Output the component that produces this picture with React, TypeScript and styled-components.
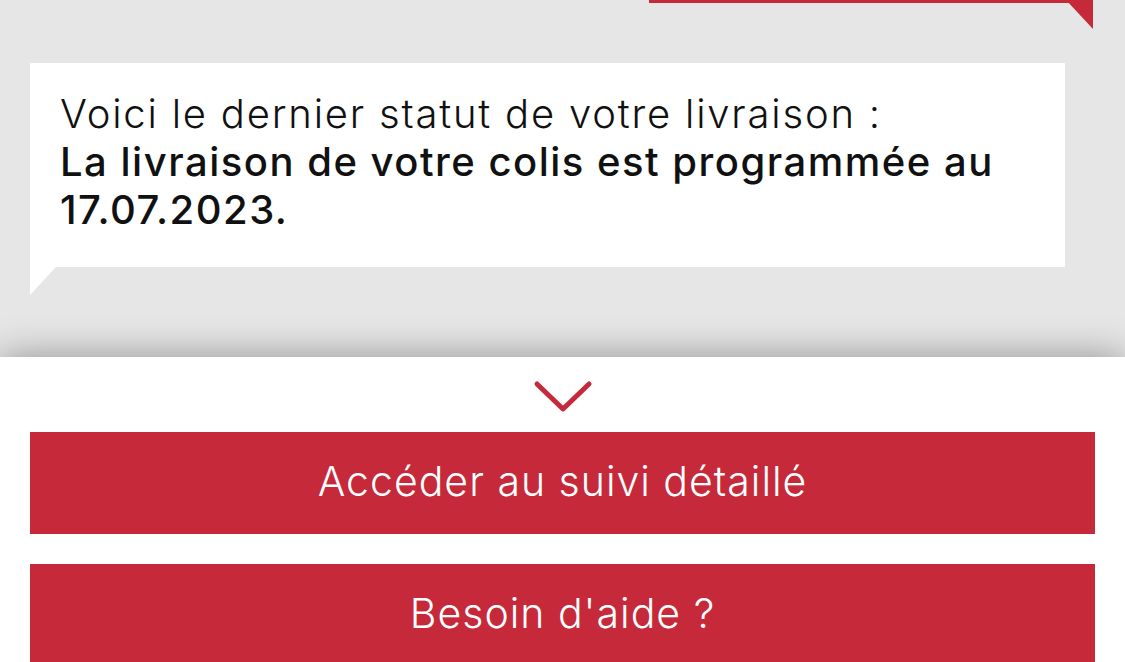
import React from "react";
import styled, { createGlobalStyle } from "styled-components";

const Global = createGlobalStyle`
  html, body { margin: 0; padding: 0; background: #ffffff; }
  body { font-family: "Inter", "Open Sans", sans-serif; overflow: hidden; }
  * { box-sizing: border-box; }
`;

const RED = "#c5293a";

const Page = styled.div`
  display: flex;
  flex-direction: column;
  width: 1125px;
  height: 662px;
  overflow: hidden;
  & > * { flex-shrink: 0; }
`;

const TopSection = styled.section`
  display: flex;
  flex-direction: column;
  background: #e6e6e6;
  height: 357px;
  padding: 0 60px 0 30px;
`;

const Ribbon = styled.div`
  position: relative;
  align-self: flex-end;
  width: 444px;
  height: 29px;
  margin-right: -28px;
  &::before {
    content: "";
    position: absolute;
    left: 0;
    top: 0;
    right: 0;
    height: 3px;
    background: ${RED};
  }
  &::after {
    content: "";
    position: absolute;
    right: 0;
    top: 0;
    width: 0;
    height: 0;
    border-top: 29px solid ${RED};
    border-left: 27px solid transparent;
  }
`;

const Bubble = styled.div`
  position: relative;
  margin-top: 34px;
  background: #ffffff;
  height: 204px;
  padding: 27px 31px 0 30px;
  font-size: 40px;
  line-height: 48px;
  color: #111111;
  &::after {
    content: "";
    position: absolute;
    left: 0;
    top: 100%;
    width: 0;
    height: 0;
    border-top: 28px solid #ffffff;
    border-right: 26px solid transparent;
  }
`;

const Light = styled.div`
  font-weight: 300;
  letter-spacing: 1.8px;
`;

const Strong = styled.div`
  font-weight: 500;
  letter-spacing: 1.5px;
`;

const Strip = styled.div`
  position: relative;
  display: flex;
  align-items: center;
  justify-content: center;
  height: 75px;
  background: #ffffff;
  box-shadow: 0 0 38px rgba(0, 0, 0, 0.38);
  z-index: 1;
`;

const Actions = styled.div`
  position: relative;
  z-index: 2;
  display: flex;
  flex-direction: column;
  gap: 30px;
  padding: 0 30px;
  background: #ffffff;
`;

const ActionButton = styled.button`
  display: flex;
  align-items: center;
  justify-content: center;
  height: 102px;
  border: none;
  background: ${RED};
  color: #ffffff;
  font-family: "Inter", "Open Sans", sans-serif;
  font-weight: 300;
  font-size: 41px;
  letter-spacing: 1px;
  padding: 0 0 5px 0;
  cursor: pointer;
`;

export default function App() {
  return (
    <>
      <Global />
      <Page>
        <TopSection>
          <Ribbon />
          <Bubble>
            <Light>Voici le dernier statut de votre livraison :</Light>
            <Strong>La livraison de votre colis est programmée au 17.07.2023.</Strong>
          </Bubble>
        </TopSection>
        <Strip>
          <svg width="60" height="36" viewBox="0 0 60 36">
            <polyline
              points="4,7 30,32 56,7"
              fill="none"
              stroke={RED}
              strokeWidth="5"
              strokeLinecap="round"
              strokeLinejoin="round"
            />
          </svg>
        </Strip>
        <Actions>
          <ActionButton>Accéder au suivi détaillé</ActionButton>
          <ActionButton>Besoin d'aide ?</ActionButton>
        </Actions>
      </Page>
    </>
  );
}
